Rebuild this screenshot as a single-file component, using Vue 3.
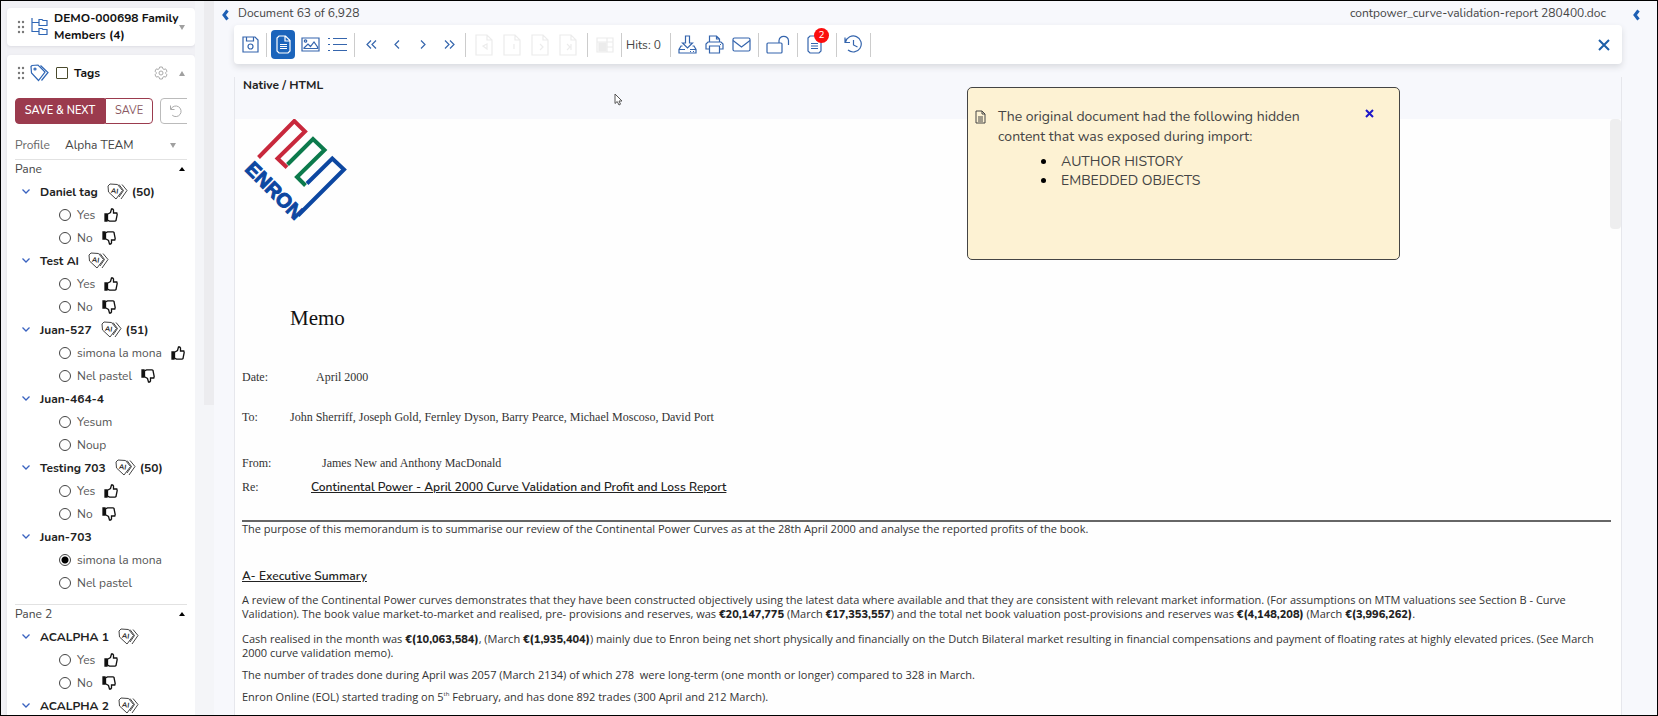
<script setup>
import { ref } from 'vue'

const panes = ref([
  {
    name: 'Pane',
    groups: [
      { name: 'Daniel tag', ai: true, count: 50, options: [{ text: 'Yes', vote: 'up' }, { text: 'No', vote: 'down' }] },
      { name: 'Test AI', ai: true, options: [{ text: 'Yes', vote: 'up' }, { text: 'No', vote: 'down' }] },
      { name: 'Juan-527', ai: true, count: 51, options: [{ text: 'simona la mona', vote: 'up' }, { text: 'Nel pastel', vote: 'down' }] },
      { name: 'Juan-464-4', options: [{ text: 'Yesum' }, { text: 'Noup' }] },
      { name: 'Testing 703', ai: true, count: 50, options: [{ text: 'Yes', vote: 'up' }, { text: 'No', vote: 'down' }] },
      { name: 'Juan-703', picked: 'simona la mona', options: [{ text: 'simona la mona' }, { text: 'Nel pastel' }] }
    ]
  },
  {
    name: 'Pane 2',
    groups: [
      { name: 'ACALPHA 1', ai: true, options: [{ text: 'Yes', vote: 'up' }, { text: 'No', vote: 'down' }] },
      { name: 'ACALPHA 2', ai: true, options: [] }
    ]
  }
])

const noticeOpen = ref(true)
const profile = ref('Alpha TEAM')
const hidden = ['AUTHOR HISTORY', 'EMBEDDED OBJECTS']
const dots = [2, 7, 12]
const pageMarks = ['M8 12l4-2v5z', 'M11 10v5', 'M9 10l3 3-3 3', 'M8 10l3 3-3 3M12 10v6']
</script>

<template>
  <div class="app">
    <aside class="sidebar">
      <section class="card family">
        <svg class="grip" width="8" height="14" viewBox="0 0 8 14"><template v-for="y in dots" :key="y"><circle cx="2" :cy="y" r="1.2" /><circle cx="6" :cy="y" r="1.2" /></template></svg>
        <svg class="line blue tree-icon" width="17" height="18" viewBox="0 0 17 18"><path d="M1 0v13.500h7M1 4.500h7M8 1.500h3l1 1h4v5H8zM8 10.500h3l1 1h4v5H8z" /></svg>
        <h2>DEMO-000698 Family Members (4)</h2>
        <svg class="caret" width="6" height="5" viewBox="0 0 6 5"><path d="M0 0h6L3 5z" /></svg>
      </section>

      <section class="card tags">
        <header class="tags-head">
          <svg class="grip" width="8" height="14" viewBox="0 0 8 14"><template v-for="y in dots" :key="y"><circle cx="2" :cy="y" r="1.200" /><circle cx="6" :cy="y" r="1.200" /></template></svg>
          <svg class="line blue" width="20" height="18" viewBox="0 0 20 18"><path d="M1 2.500L2 1.500l6-.5 7 7-6.500 8.500L1.500 9zM10.500 1.500l7.500 7-6.500 8" /><circle cx="5" cy="5" r="1" /></svg>
          <input id="all-tags" class="box" type="checkbox">
          <label for="all-tags">Tags</label>
          <button class="plain gear" aria-label="Settings">
            <svg class="line" width="14" height="14" viewBox="0 0 14 14"><path d="M5.700 1h2.600l.5 1.700 1.200.7 1.700-.5L13 5.200l-1.200 1.200v1.200L13 8.800l-1.300 2.300-1.700-.5-1.200.7-.5 1.700H5.700l-.5-1.700-1.200-.7-1.700.5L1 8.800l1.200-1.200V6.400L1 5.200l1.300-2.300 1.700.5 1.200-.7z" /><circle cx="7" cy="7" r="2" /></svg>
          </button>
          <button class="plain" aria-label="Collapse tags"><svg class="caret" width="6" height="5" viewBox="0 0 6 5"><path d="M0 5h6L3 0z" /></svg></button>
        </header>

        <div class="actions">
          <button class="save-next">SAVE &amp; NEXT</button>
          <button class="save">SAVE</button>
          <button class="undo" aria-label="Undo"><svg class="line" width="14" height="14" viewBox="0 0 14 14"><path d="M1.500 1.500v4h4M2 5a5.300 5.300 0 1 1 1.200 6.200" /></svg></button>
        </div>

        <div class="profile">
          <label for="profile">Profile</label>
          <select id="profile" v-model="profile"><option>Alpha TEAM</option></select>
          <svg class="caret" width="6" height="5" viewBox="0 0 6 5"><path d="M0 0h6L3 5z" /></svg>
        </div>

        <div v-for="pane in panes" :key="pane.name" class="pane">
          <button class="plain pane-head">{{ pane.name }}<svg width="6" height="4" viewBox="0 0 6 4"><path d="M0 4h6L3 0z" /></svg></button>
          <div class="tree">
            <fieldset v-for="group in pane.groups" :key="group.name">
              <div class="group">
                <svg class="line chevron" width="8" height="5" viewBox="0 0 8 5"><path d="M.5.5L4 4 7.500.5" /></svg>
                <b>{{ group.name }}</b>
                <svg v-if="group.ai" class="line ai" width="21" height="18" viewBox="0 0 21 18">
                  <path d="M1 3L3 1l7.500.5 5 6L9 16 1.500 9zM12 1.500l4.500 6L12 14M15 1.500l5 6-6 8.500" />
                  <text x="4" y="10" transform="rotate(8 6 8)">AI</text>
                </svg>
                <b v-if="group.count">({{ group.count }})</b>
              </div>
              <label v-for="option in group.options" :key="option.text" class="option">
                <input v-model="group.picked" type="radio" :name="pane.name + group.name" :value="option.text">
                <span>{{ option.text }}</span>
                <svg v-if="option.vote" class="line thumb" :class="option.vote" width="14" height="14" viewBox="0 0 14 14">
                  <path d="M3.500 6.200L6.500 4.500 7.500 1h1.200L9.500 2v3h3.300l.4 1.500-1.200 6-1 .7H5.500l-2-1z" /><path class="cuff" d="M1 6h2v7H1z" />
                </svg>
              </label>
            </fieldset>
          </div>
        </div>
      </section>
    </aside>

    <div class="side-scroll"><i></i></div>

    <button class="plain rail left" aria-label="Collapse sidebar"><svg width="7" height="12" viewBox="0 0 7 12"><path d="M5.500 1.500L2 6l3.500 4.500" /></svg></button>

    <main class="viewer">
      <header class="title">
        <span>Document 63 of 6,928</span>
        <span class="file">contpower_curve-validation-report 280400.doc</span>
      </header>

      <nav class="toolbar">
        <div class="tools narrow"><button aria-label="Save"><svg class="line" width="17" height="17" viewBox="0 0 17 17"><path d="M1 1h12l3 3v12H1zM4.500 1v4h7V1" /><circle cx="8.500" cy="10.500" r="2.500" /></svg></button></div>
        <div class="tools">
          <button class="active" aria-label="Text view"><svg class="line" width="15" height="19" viewBox="0 0 15 19"><path d="M3 1h6.500L14 5.500V16l-2 2H3l-2-2V3zM9 1v5h5M4 9.500h7M4 11.500h7M4 13.500h7" /></svg></button>
          <button aria-label="Image view"><svg class="line" width="19" height="15" viewBox="0 0 19 15"><path d="M1 1h17v13H1zM3 11l4-4 2.500 2.500L13 5l3.500 5v1.500H3z" /><circle cx="4.500" cy="4" r="1.200" /></svg></button>
          <button aria-label="List view"><svg class="line" width="19" height="15" viewBox="0 0 19 15"><path d="M5 1.500h14M5 7.500h14M5 13.500h14M0 1.500h2M0 7.500h2M0 13.500h2" /></svg></button>
        </div>
        <div class="tools narrow">
          <button aria-label="First"><svg class="line" width="11" height="9" viewBox="0 0 11 9"><path d="M5 .5l-4 4 4 4M10 .5l-4 4 4 4" /></svg></button>
          <button aria-label="Previous"><svg class="line" width="6" height="9" viewBox="0 0 6 9"><path d="M5 .5l-4 4 4 4" /></svg></button>
          <button aria-label="Next"><svg class="line" width="6" height="9" viewBox="0 0 6 9"><path d="M1 .5l4 4-4 4" /></svg></button>
          <button aria-label="Last"><svg class="line" width="11" height="9" viewBox="0 0 11 9"><path d="M1 .5l4 4-4 4M6 .5l4 4-4 4" /></svg></button>
        </div>
        <div class="tools wide off">
          <button v-for="mark in pageMarks" :key="mark" disabled aria-label="Page"><svg class="line" width="18" height="22" viewBox="0 0 18 22"><path d="M1 1h11l5 5v15H1zM12 1v5h5" /><path :d="mark" /></svg></button>
        </div>
        <div class="tools off"><button disabled aria-label="Grid"><svg class="line" width="18" height="16" viewBox="0 0 18 16"><path d="M1 1h16v14H1zM11 1v14M1 5h16M11 10h6" /><path class="fill" d="M3 6h7v8H3z" /></svg></button></div>
        <div class="tools hits">Hits: 0</div>
        <div class="tools">
          <button aria-label="Download"><svg class="line" width="19" height="19" viewBox="0 0 19 19"><path d="M7.500 1h4v7h3l-5 5-5-5h3zM4.500 11H3l-2 3.500V18h17v-3.500L16 11h-1.500M1 14.500h6M12 14.500h6M12 16.500h1M15 16.500h1" /></svg></button>
          <button aria-label="Print"><svg class="line" width="19" height="19" viewBox="0 0 19 19"><path d="M4.500 7V1h7l3 3v3M11.500 1v3h3M4.500 14H1V9l2-2h13l2 2v5h-3.500M4.500 11h10v7h-10zM15 9.500h1" /></svg></button>
          <button aria-label="Mail"><svg class="line" width="19" height="15" viewBox="0 0 19 15"><rect x="1" y="1" width="17" height="13" rx="1.500" /><path d="M1 3.500l8.500 6.500L18 3.500" /></svg></button>
        </div>
        <div class="tools broad"><button aria-label="Unlock"><svg class="line" width="24" height="19" viewBox="0 0 24 19"><rect x="1" y="8" width="15" height="10" rx="1" /><path d="M13 8V5.500a4.800 4.800 0 0 1 9.500 0V10" /></svg></button></div>
        <div class="tools broad">
          <button class="notes" aria-label="Notes"><svg class="line" width="15" height="19" viewBox="0 0 15 19"><path d="M3 1h6.500L14 5.500V16l-2 2H3l-2-2V3zM4 8.500h7M4 11h7M4 13.500h7" /></svg><em>2</em></button>
        </div>
        <div class="tools"><button aria-label="History"><svg class="line" width="19" height="19" viewBox="0 0 19 19"><path d="M1 2.500v5h5M1.500 7a8 8 0 1 1 2.500 8M9.500 5v5l4 2" /></svg></button></div>
        <button class="plain close" aria-label="Close"><svg width="12" height="12" viewBox="0 0 12 12"><path d="M1 1l10 10M11 1L1 11" /></svg></button>
      </nav>

      <section class="panel">
        <h1>Native / HTML</h1>
        <article class="doc">
          <svg class="logo" width="104" height="104" viewBox="1 2 104 104" role="img" aria-label="Enron">
            <path class="red" d="M15.500 40.500L51.300 4 62 14.500 34.500 41.500l9.500 9" />
            <path class="green" d="M44.500 47.500L70 22l11.500 11-27.500 27 8.500 8.500" />
            <path class="navy" d="M64 66.500l25.300-25L101 52.500 55 98.500" />
            <text x="0" y="0" transform="translate(1 53) rotate(45)">ENRON</text>
          </svg>

          <p class="memo">Memo</p>
          <dl>
            <div class="date"><dt>Date:</dt><dd>April 2000</dd></div>
            <div class="to"><dt>To:</dt><dd>John Sherriff, Joseph Gold, Fernley Dyson, Barry Pearce, Michael Moscoso, David Port</dd></div>
            <div class="from"><dt>From:</dt><dd>James New and Anthony MacDonald</dd></div>
            <div class="re"><dt>Re:</dt><dd><b>Continental Power - April 2000 Curve Validation and Profit and Loss Report</b></dd></div>
          </dl>
          <p>The purpose of this memorandum is to summarise our review of the Continental Power Curves as at the 28th April 2000 and analyse the reported profits of the book.</p>
          <h3>A- Executive Summary</h3>
          <p class="review">A review of the Continental Power curves demonstrates that they have been constructed objectively using the latest data where available and that they are consistent with relevant market information. (For assumptions on MTM valuations see Section B - Curve<br>Validation). The book value market-to-market and realised, pre- provisions and reserves, was <b>€20,147,775</b> (March <b>€17,353,557</b>) and the total net book valuation post-provisions and reserves was <b>€(4,148,208)</b> (March <b>€(3,996,262)</b>.</p>
          <p>Cash realised in the month was <b>€(10,063,584)</b>, (March <b>€(1,935,404)</b>) mainly due to Enron being net short physically and financially on the Dutch Bilateral market resulting in financial compensations and payment of floating rates at highly elevated prices. (See March<br>2000 curve validation memo).</p>
          <p>The number of trades done during April was 2057 (March 2134) of which 278&nbsp; were long-term (one month or longer) compared to 328 in March.</p>
          <p>Enron Online (EOL) started trading on 5<sup>th</sup> February, and has done 892 trades (300 April and 212 March).</p>
        </article>
        <i class="doc-thumb"></i>
      </section>
    </main>

    <button class="plain rail right" aria-label="Expand panel"><svg width="7" height="12" viewBox="0 0 7 12"><path d="M5.500 1.500L2 6l3.500 4.500" /></svg></button>

    <div v-if="noticeOpen" class="notice" role="dialog" aria-label="Hidden content">
      <svg class="line" width="11" height="14" viewBox="0 0 11 14"><path d="M1 1h6l3 3v9H1zM7 1v3h3M3 7h5M3 9h5M3 11h5" /></svg>
      <div>
        <p>The original document had the following hidden content that was exposed during import:</p>
        <ul><li v-for="item in hidden" :key="item">{{ item }}</li></ul>
      </div>
      <button class="plain" aria-label="Dismiss" @click="noticeOpen = false"><svg width="9" height="9" viewBox="0 0 9 9"><path d="M1 1l7 7M8 1L1 8" /></svg></button>
    </div>

    <svg class="pointer" width="9" height="13" viewBox="0 0 9 13"><path d="M1 1v9.500l2.200-2L5 12l1.500-.8L5 8h3z" /></svg>
  </div>
</template>

<style>
body {
  margin: 0;
}
</style>

<style scoped>
.app {
  box-sizing: border-box;
  position: relative;
  display: flex;
  height: 100vh;
  overflow: hidden;
  border: 1px solid #000;
  background: #f7f8fc;
  color: #444;
  font: 12px/18px Nunito, Lato, "Noto Sans", sans-serif;
}
.app *, .app *::before {
  box-sizing: border-box;
}
h1, h2, h3, p, dl, dd, ul, fieldset {
  margin: 0;
  padding: 0;
  border: 0;
}
svg {
  display: block;
  flex: none;
}
button, select {
  font: inherit;
  color: inherit;
  padding: 0;
}
.plain {
  border: 0;
  background: none;
}
.line {
  fill: none;
  stroke: currentColor;
}
.blue {
  color: #2f66b5;
  stroke-width: 1.2;
}
.caret {
  fill: #a0a0a0;
}
.grip {
  fill: #777;
}

.sidebar {
  display: flex;
  flex: none;
  flex-direction: column;
  gap: 9px;
  width: 194px;
  padding: 7px 0 0 6px;
  background: #f1f1f5;
}
.card {
  flex: none;
  border-radius: 4px;
  background: #fff;
  box-shadow: 0 1px 3px #dcdce2;
}
.family {
  display: flex;
  align-items: center;
  height: 38px;
  padding: 0 10px;
}
.tree-icon {
  margin-left: 6px;
}
h2 {
  width: 128px;
  margin-left: 6px;
  color: #111;
  font-size: 12px;
  line-height: 17px;
}
.family .caret {
  position: absolute;
  left: 178px;
  top: 24px;
}
.tags {
  padding: 0 8px;
  overflow: hidden;
}
.tags-head {
  display: flex;
  align-items: center;
  height: 36px;
  padding: 0 2px;
}
.tags-head .blue {
  margin-left: 5px;
}
.tags-head label {
  flex: 1;
  margin-left: 6px;
  color: #111;
  font-weight: bold;
}
.box {
  appearance: none;
  width: 12px;
  height: 12px;
  margin: 0 0 0 6px;
  border: 1px solid #4a4a2c;
  border-radius: 1px;
}
.gear {
  margin-right: 11px;
  color: #aaa;
}
.actions {
  display: flex;
  height: 26px;
  margin-top: 7px;
  overflow: hidden;
}
.actions button {
  flex: none;
  border: 1px solid #9b3b4e;
  font-size: 11px;
}
.actions .save-next {
  width: 90px;
  border-radius: 4px 0 0 4px;
  background: #9b3b4e;
  color: #fff;
  font-weight: 600;
}
.actions .save {
  width: 48px;
  border-radius: 0 4px 4px 0;
  background: #fff;
  color: #8a5a64;
}
.actions .undo {
  width: 40px;
  margin-left: 7px;
  padding-left: 8px;
  border-color: #bbb;
  border-radius: 4px;
  background: #fff;
  color: #aaa;
}
.profile {
  display: flex;
  align-items: center;
  height: 29px;
  margin-top: 7px;
  padding-right: 11px;
  border-bottom: 1px solid #e2e2e2;
}
.profile label {
  width: 50px;
  color: #666;
}
.profile select {
  flex: 1;
  appearance: none;
  border: 0;
  background: none;
}
.pane + .pane {
  border-top: 1px solid #e2e2e2;
}
.pane-head {
  display: flex;
  align-items: center;
  justify-content: space-between;
  width: 100%;
  height: 17px;
  padding-right: 2px;
  fill: #000;
}
.tree {
  padding: 3px 0 10px 7px;
}
.group, .option {
  display: flex;
  align-items: center;
  height: 23px;
  white-space: nowrap;
}
.group b {
  margin-left: 10px;
  color: #222;
}
.chevron {
  color: #3a63c0;
  stroke-width: 1.3;
}
.ai {
  margin-left: 9px;
  color: #444;
}
.ai text {
  fill: #222;
  stroke: none;
  font-size: 7px;
  font-weight: bold;
}
.group .ai + b {
  margin-left: 4px;
}
.option {
  gap: 6px;
  padding-left: 37px;
  color: #555;
}
.option input {
  appearance: none;
  flex: none;
  width: 12px;
  height: 12px;
  margin: 0;
  border: 1px solid #444;
  border-radius: 50%;
}
.option input:checked {
  background: radial-gradient(#000 3px, #fff 4px);
}
.thumb {
  margin-left: 3px;
  color: #111;
  stroke-width: 1.3;
}
.thumb.down {
  transform: scaleY(-1);
}
.cuff {
  fill: #111;
}

.side-scroll {
  flex: none;
  width: 19px;
  background: #f4f5f8;
}
.side-scroll i {
  display: block;
  height: 404px;
  margin-left: 9px;
  background: #ececef;
}
.rail {
  flex: none;
  width: 20px;
  height: 28px;
}
.rail svg {
  margin-left: 8px;
  fill: none;
  stroke: #1d5fb4;
  stroke-width: 3;
}
.rail.right {
  width: 35px;
}
.rail.right svg {
  margin-left: 11px;
}

.viewer {
  display: flex;
  flex: 1;
  flex-direction: column;
  min-width: 0;
}
.title {
  display: flex;
  flex: none;
  justify-content: space-between;
  height: 24px;
  padding: 3px 16px 0 4px;
}
.toolbar {
  display: flex;
  flex: none;
  align-items: center;
  height: 39px;
  border-radius: 4px;
  background: #fff;
  box-shadow: 0 3px 6px #d9dadf;
}
.toolbar .line {
  stroke-width: 1.2;
}
.app .tools {
  box-sizing: content-box;
  display: flex;
  align-items: center;
  height: 24px;
  padding: 0 3px;
  border-right: 1px solid #ccc;
}
.tools button {
  display: flex;
  align-items: center;
  justify-content: center;
  width: 27px;
  height: 29px;
  border: 0;
  background: none;
  color: #3565ad;
}
.tools.narrow button {
  width: 26px;
}
.app .tools.wide {
  padding: 0 5px 0 4px;
}
.tools.wide button {
  width: 28px;
}
.tools.broad button {
  width: 32px;
}
.tools button.active {
  width: 24px;
  margin: 0 2px 0 1px;
  border-radius: 4px;
  background: #1b64bb;
  color: #fff;
}
.tools.off button {
  color: #ececec;
}
.fill {
  fill: #ececec;
}
.app .tools.hits {
  width: 41px;
  padding: 0 3px 0 4px;
  white-space: nowrap;
}
.tools .notes {
  position: relative;
  justify-content: flex-start;
  padding-left: 6px;
}
.notes em {
  position: absolute;
  top: -2px;
  left: 13px;
  width: 15px;
  height: 15px;
  border-radius: 50%;
  background: #fb0d0d;
  color: #fff;
  font: 10px/15px Nunito, Lato, sans-serif;
}
.close {
  margin: 0 12px 0 auto;
}
.close svg {
  fill: none;
  stroke: #1d5fa8;
  stroke-width: 2;
}
.panel {
  position: relative;
  display: flex;
  flex: 1;
  flex-direction: column;
  min-height: 0;
  margin-top: 13px;
  border: 1px solid #e6e7ec;
  border-width: 0 1px;
}
h1 {
  flex: none;
  height: 42px;
  padding-left: 8px;
  color: #222;
  font-size: 12px;
  line-height: 17px;
}
.doc {
  flex: 1;
  min-height: 0;
  padding: 0 10px 0 7px;
  overflow: hidden;
  background: #fefefe;
  color: #333;
  font: 11px/14px "Open Sans", "Liberation Sans", Arial, sans-serif;
}
.doc-thumb {
  position: absolute;
  top: 42px;
  right: 0;
  width: 11px;
  height: 110px;
  border-radius: 4px;
  background: #eeeeef;
}
.doc b, .doc h3 {
  color: #222;
  font-family: Nunito, Lato, sans-serif;
  font-size: 12px;
  font-weight: 600;
  line-height: 12px;
}
.doc p b {
  font-size: 11px;
  font-weight: 800;
}
.doc p {
  margin-bottom: 8px;
}
.doc .review {
  margin-bottom: 11px;
}
.logo {
  margin-left: 2px;
  overflow: visible;
}
.logo path {
  fill: none;
  stroke-width: 4;
}
.red {
  stroke: #c8283c;
}
.green {
  stroke: #0c7a4c;
}
.navy {
  stroke: #0d47a1;
}
.logo text {
  fill: #0d47a1;
  stroke: #0d47a1;
  font: bold 20px "Liberation Sans", Arial, sans-serif;
}
.doc .memo {
  margin: 83px 0 0 48px;
  color: #111;
  font: 21px/24px "Liberation Serif", "Times New Roman", serif;
}
dl {
  padding-bottom: 26px;
  border-bottom: 2px solid #666;
  font-family: "Liberation Serif", "Times New Roman", serif;
  font-size: 12px;
}
dl div {
  display: flex;
}
.date {
  padding-top: 40px;
}
.to {
  padding-top: 26px;
}
.from {
  padding-top: 32px;
}
.re {
  padding-top: 10px;
}
dt {
  width: 48px;
}
.date dd {
  margin-left: 26px;
}
.from dd {
  margin-left: 32px;
}
.re dd {
  margin-left: 21px;
}
.re b, h3 {
  text-decoration: underline;
}
.doc h3 {
  margin: 33px 0 10px;
  line-height: 14px;
}
sup {
  font-size: 6px;
  line-height: 0;
}

.notice {
  position: absolute;
  top: 86px;
  right: 257px;
  display: flex;
  width: 433px;
  height: 173px;
  padding: 19px 25px 0 7px;
  border: 1px solid #444;
  border-radius: 5px;
  background: #fdf2d3;
  font-size: 14px;
  line-height: 20px;
}
.notice .line {
  margin: 3px 12px 0 0;
}
.notice div {
  width: 310px;
}
.notice ul {
  margin-top: 5px;
  padding-left: 59px;
  line-height: 19px;
}
.notice li {
  padding-left: 4px;
}
.notice li::marker {
  color: #000;
}
.notice button {
  height: 9px;
  margin: 2px 0 0 auto;
}
.notice button svg {
  fill: none;
  stroke: #1d17c9;
  stroke-width: 2;
}
.pointer {
  position: absolute;
  left: 613px;
  top: 92px;
  fill: #fff;
  stroke: #555;
}
</style>
